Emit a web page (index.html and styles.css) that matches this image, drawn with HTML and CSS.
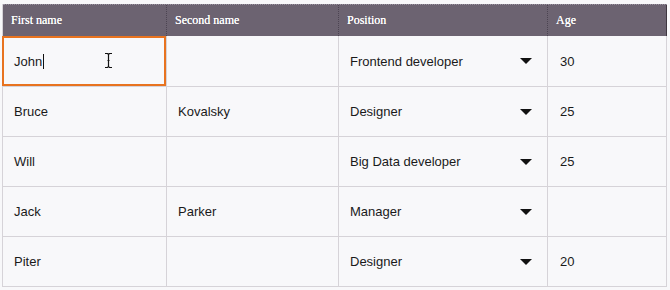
FILE: index.html
```html
<!DOCTYPE html>
<html>
<head>
<meta charset="utf-8">
<link rel="stylesheet" href="styles.css">
</head>
<body>
<div class="table">
  <div class="row head">
    <div class="hcell">First name</div>
    <div class="hcell">Second name</div>
    <div class="hcell">Position</div>
    <div class="hcell last">Age</div>
  </div>
  <div class="row first">
    <div class="cell selected">John<span class="caret"></span>
      <svg class="ibeam" width="9" height="17" viewBox="0 0 9 17"><path d="M1 1.5h2.5l1 1 1-1H8M4.5 2.5v12M1 15.5h2.5l1-1 1 1H8M3.5 8.5h2" fill="none" stroke="#111" stroke-width="1.2"/></svg>
    </div>
    <div class="cell"></div>
    <div class="cell select">Frontend developer<span class="arrow"></span></div>
    <div class="cell last">30</div>
  </div>
  <div class="row">
    <div class="cell">Bruce</div>
    <div class="cell">Kovalsky</div>
    <div class="cell select">Designer<span class="arrow"></span></div>
    <div class="cell last">25</div>
  </div>
  <div class="row">
    <div class="cell">Will</div>
    <div class="cell"></div>
    <div class="cell select">Big Data developer<span class="arrow"></span></div>
    <div class="cell last">25</div>
  </div>
  <div class="row">
    <div class="cell">Jack</div>
    <div class="cell">Parker</div>
    <div class="cell select">Manager<span class="arrow"></span></div>
    <div class="cell last"></div>
  </div>
  <div class="row">
    <div class="cell">Piter</div>
    <div class="cell"></div>
    <div class="cell select">Designer<span class="arrow"></span></div>
    <div class="cell last">20</div>
  </div>
</div>
</body>
</html>
```

FILE: styles.css
```css
html, body {
  margin: 0;
  background: #f8f8fa;
}
body {
  padding: 4px 0 0 2px;
  font-family: "Liberation Sans", Arial, sans-serif;
  font-size: 13px;
  color: #1a1a1a;
}
.table {
  width: 664px;
  border-left: 1px solid #d6d3d8;
}
.row {
  display: grid;
  grid-template-columns: 164px 172px 209px 119px;
  height: 50px;
  box-sizing: border-box;
}
.row.first {
  height: 51px;
}
.head {
  height: 32px;
  background: #6c6371;
  border-top: 1px dotted #9a93a0;
}
.hcell {
  font-family: "Liberation Serif", "Times New Roman", serif;
  font-size: 12px;
  color: #ffffff;
  display: flex;
  align-items: center;
  padding-left: 8px;
  border-right: 1px dotted #4c4452;
  box-sizing: border-box;
  text-shadow: 0 0 0.3px #ffffff;
}
.hcell.last {
  border-right: 1px solid #3e3640;
}
.cell {
  display: flex;
  align-items: center;
  padding-left: 11px;
  box-sizing: border-box;
  border-right: 1px solid #d6d3d8;
  border-bottom: 1px solid #d6d3d8;
  position: relative;
}
.cell.last {
  padding-left: 12px;
}
.select {
  padding-right: 15px;
  justify-content: space-between;
}
.arrow {
  width: 0;
  height: 0;
  border-left: 6px solid transparent;
  border-right: 6px solid transparent;
  border-top: 6px solid #111;
}
.selected::after {
  content: "";
  position: absolute;
  left: -1px;
  top: 0;
  right: 0;
  bottom: 0;
  border: 2px solid #e8731f;
}
.caret {
  display: inline-block;
  width: 1px;
  height: 15px;
  background: #111;
  margin-left: 1px;
}
.ibeam {
  position: absolute;
  left: 101px;
  top: 16px;
}
```
